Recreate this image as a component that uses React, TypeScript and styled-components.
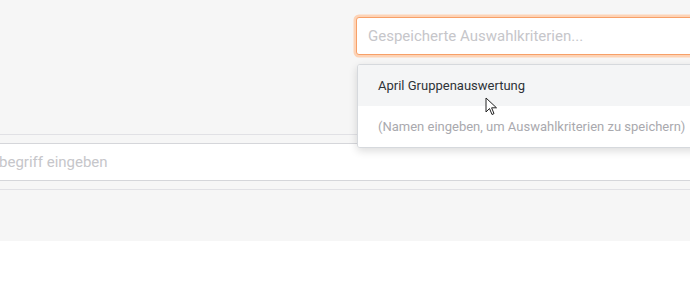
import React from 'react'
import styled, { createGlobalStyle } from 'styled-components'

const GlobalStyle = createGlobalStyle`
	html, body {
		margin: 0;
		padding: 0;
		background: #ffffff;
		overflow: hidden;
		font-family: Roboto, "Liberation Sans", sans-serif;
	}
`

const Page = styled.div`
	position: relative;
	width: 690px;
	height: 305px;
	overflow: hidden;
`

const FilterArea = styled.section`
	background: #f6f6f6;
	height: 241px;
	display: flex;
	flex-direction: column;
`

const TopBar = styled.div`
	display: flex;
	padding: 17px 0 0 356px;
	border-bottom: 1px solid #e1e1e5;
	box-sizing: border-box;
	height: 135px;
`

const SavedField = styled.div`
	position: relative;
	width: 380px;
	flex-shrink: 0;
`

const SavedInput = styled.div`
	height: 38px;
	box-sizing: border-box;
	background: #fff;
	border: 1px solid #f7a068;
	border-radius: 3px;
	box-shadow: 0 0 0 2.5px #fdd3b6;
	padding: 0 11px;
	display: flex;
	align-items: center;
	font-size: 15px;
	color: #c6c6ca;
	white-space: nowrap;
`

const Menu = styled.ul`
	position: absolute;
	top: 47px;
	left: 1px;
	width: 380px;
	margin: 0;
	padding: 0;
	list-style: none;
	background: #fff;
	border: 1px solid #d6d9dd;
	border-radius: 3px;
	box-shadow: 0 3px 8px rgba(0, 0, 0, 0.14);
	overflow: hidden;
	z-index: 2;
`

const MenuItem = styled.li<{ $hint?: boolean; $active?: boolean }>`
	height: 41px;
	display: flex;
	align-items: center;
	padding-left: 20px;
	font-size: 13px;
	white-space: nowrap;
	color: ${p => (p.$hint ? '#a9a9ae' : '#2e3338')};
	background: ${p => (p.$active ? '#f4f5f6' : '#fff')};
`

const SearchBand = styled.div`
	margin-top: 8px;
	height: 38px;
	box-sizing: border-box;
	background: #fff;
	border-top: 1px solid #d5d6da;
	border-bottom: 1px solid #d5d6da;
	display: flex;
	align-items: center;
	font-size: 15px;
	color: #c6c6ca;
	white-space: nowrap;
`

const Placeholder = styled.span`
	margin-left: -1px;
`

const Divider = styled.div`
	margin-top: 8px;
	border-top: 1px solid #e1e1e5;
`

const Cursor = styled.svg`
	position: absolute;
	left: 485px;
	top: 97px;
	z-index: 3;
`

export default function App() {
	return (
		<Page>
			<GlobalStyle />
			<FilterArea>
				<TopBar>
					<SavedField>
						<SavedInput>Gespeicherte Auswahlkriterien...</SavedInput>
						<Menu>
							<MenuItem $active>April Gruppenauswertung</MenuItem>
							<MenuItem $hint>(Namen eingeben, um Auswahlkriterien zu speichern)</MenuItem>
						</Menu>
					</SavedField>
				</TopBar>
				<SearchBand>
					<Placeholder>begriff eingeben</Placeholder>
				</SearchBand>
				<Divider />
			</FilterArea>
			<Cursor width="14" height="20" viewBox="0 0 14 20">
				<path
					d="M1 1 L1 15 L4.5 11.5 L7 17.5 L9 16.6 L6.6 10.8 L11.5 10.8 Z"
					fill="#fff"
					stroke="#222"
					strokeWidth="1"
					strokeLinejoin="round"
				/>
			</Cursor>
		</Page>
	)
}
